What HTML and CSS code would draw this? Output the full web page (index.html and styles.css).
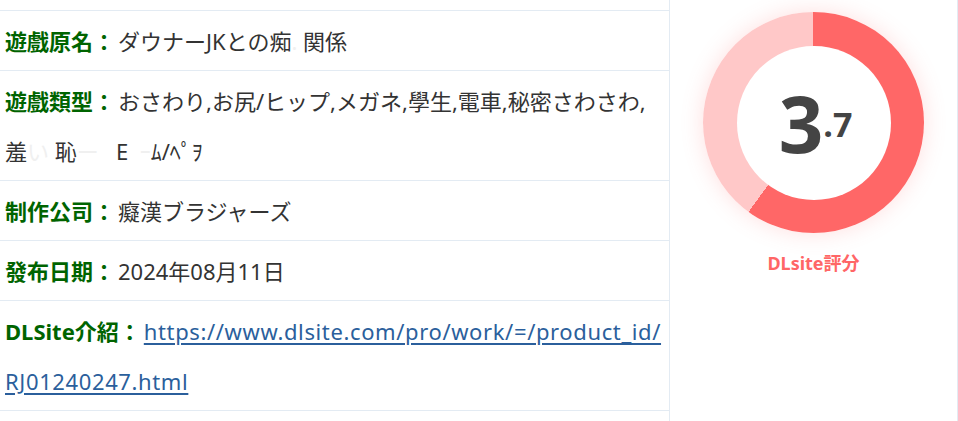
FILE: index.html
```html
<!DOCTYPE html>
<html lang="ja">
<head>
<meta charset="utf-8">
<title>DLsite</title>
<link rel="stylesheet" href="styles.css">
</head>
<body>
<div class="page">
  <div class="info">
    <div class="row"><span class="label">遊戲原名：</span>ダウナーJKとの痴<span class="faint">.</span> 関係</div>
    <div class="row"><span class="label">遊戲類型：</span>おさわり,お尻/ヒップ,メガネ,學生,電車,秘密さわさわ,<br>羞<span class="faint">い </span>恥<span class="faint">ー   </span>E  <span class="faint">ｰ</span>ﾑ/ﾍ<span class="faint">ﾟ</span>ｦ</div>
    <div class="row"><span class="label">制作公司：</span>癡漢ブラジャーズ</div>
    <div class="row"><span class="label">發布日期：</span>2024年08月11日</div>
    <div class="row"><span class="label">DLSite介紹：</span><a class="link" href="#">https://www.dlsite.com/pro/work/=/product_id/<wbr>RJ01240247.html</a></div>
  </div>
  <div class="side">
    <div class="donut">
      <div class="donut-inner">
        <span class="score-int">3</span><span class="score-dec">.7</span>
      </div>
    </div>
    <div class="score-label">DLsite評分</div>
  </div>
</div>
</body>
</html>
```
FILE: styles.css
```css
html, body {
  margin: 0;
  padding: 0;
  background: #ffffff;
}
body {
  font-family: "Noto Sans", "Noto Sans CJK TC", "Noto Sans CJK JP", sans-serif;
  color: #333333;
}
.page {
  display: flex;
  width: 958px;
  height: 421px;
  overflow: hidden;
}
.info {
  width: 669px;
  flex: none;
  padding-top: 10px;
  border-right: 1px solid #e3ebf3;
}
.row {
  border-top: 1px solid #e3ebf3;
  padding: 5px 4px 4px 5px;
  font-size: 22px;
  line-height: 50px;
  white-space: pre-wrap;
}
.row:last-child {
  border-bottom: 1px solid #e3ebf3;
}
.label {
  color: #006400;
  font-weight: bold;
  margin-right: 3px;
}
.faint {
  color: #f0f0f0;
}
.link {
  color: #2b5f9c;
  text-decoration: underline;
  text-underline-offset: 3px;
  letter-spacing: 0.62px;
}
.side {
  flex: 1;
  display: flex;
  flex-direction: column;
  align-items: center;
  padding-top: 12px;
  border-right: 1px solid #e3ebf3;
}
.donut {
  width: 221px;
  height: 221px;
  border-radius: 50%;
  background: conic-gradient(#ff6767 0deg 216deg, #ffc8c8 216deg 360deg);
  box-shadow: 0 0 22px rgba(255, 110, 110, 0.22);
  display: flex;
  align-items: center;
  justify-content: center;
}
.donut-inner {
  width: 154px;
  height: 154px;
  border-radius: 50%;
  background: #ffffff;
  display: flex;
  align-items: baseline;
  justify-content: center;
  font-family: "Open Sans", "Noto Sans", sans-serif;
  font-weight: bold;
  color: #444444;
  line-height: 154px;
}
.score-int {
  font-size: 78px;
  margin-left: 4px;
}
.score-dec {
  font-size: 34px;
  position: relative;
  top: -16px;
}
.score-label {
  margin-top: 16px;
  font-size: 18px;
  font-weight: bold;
  color: #ff6666;
  font-family: "Noto Sans", "Noto Sans CJK TC", sans-serif;
}
```
